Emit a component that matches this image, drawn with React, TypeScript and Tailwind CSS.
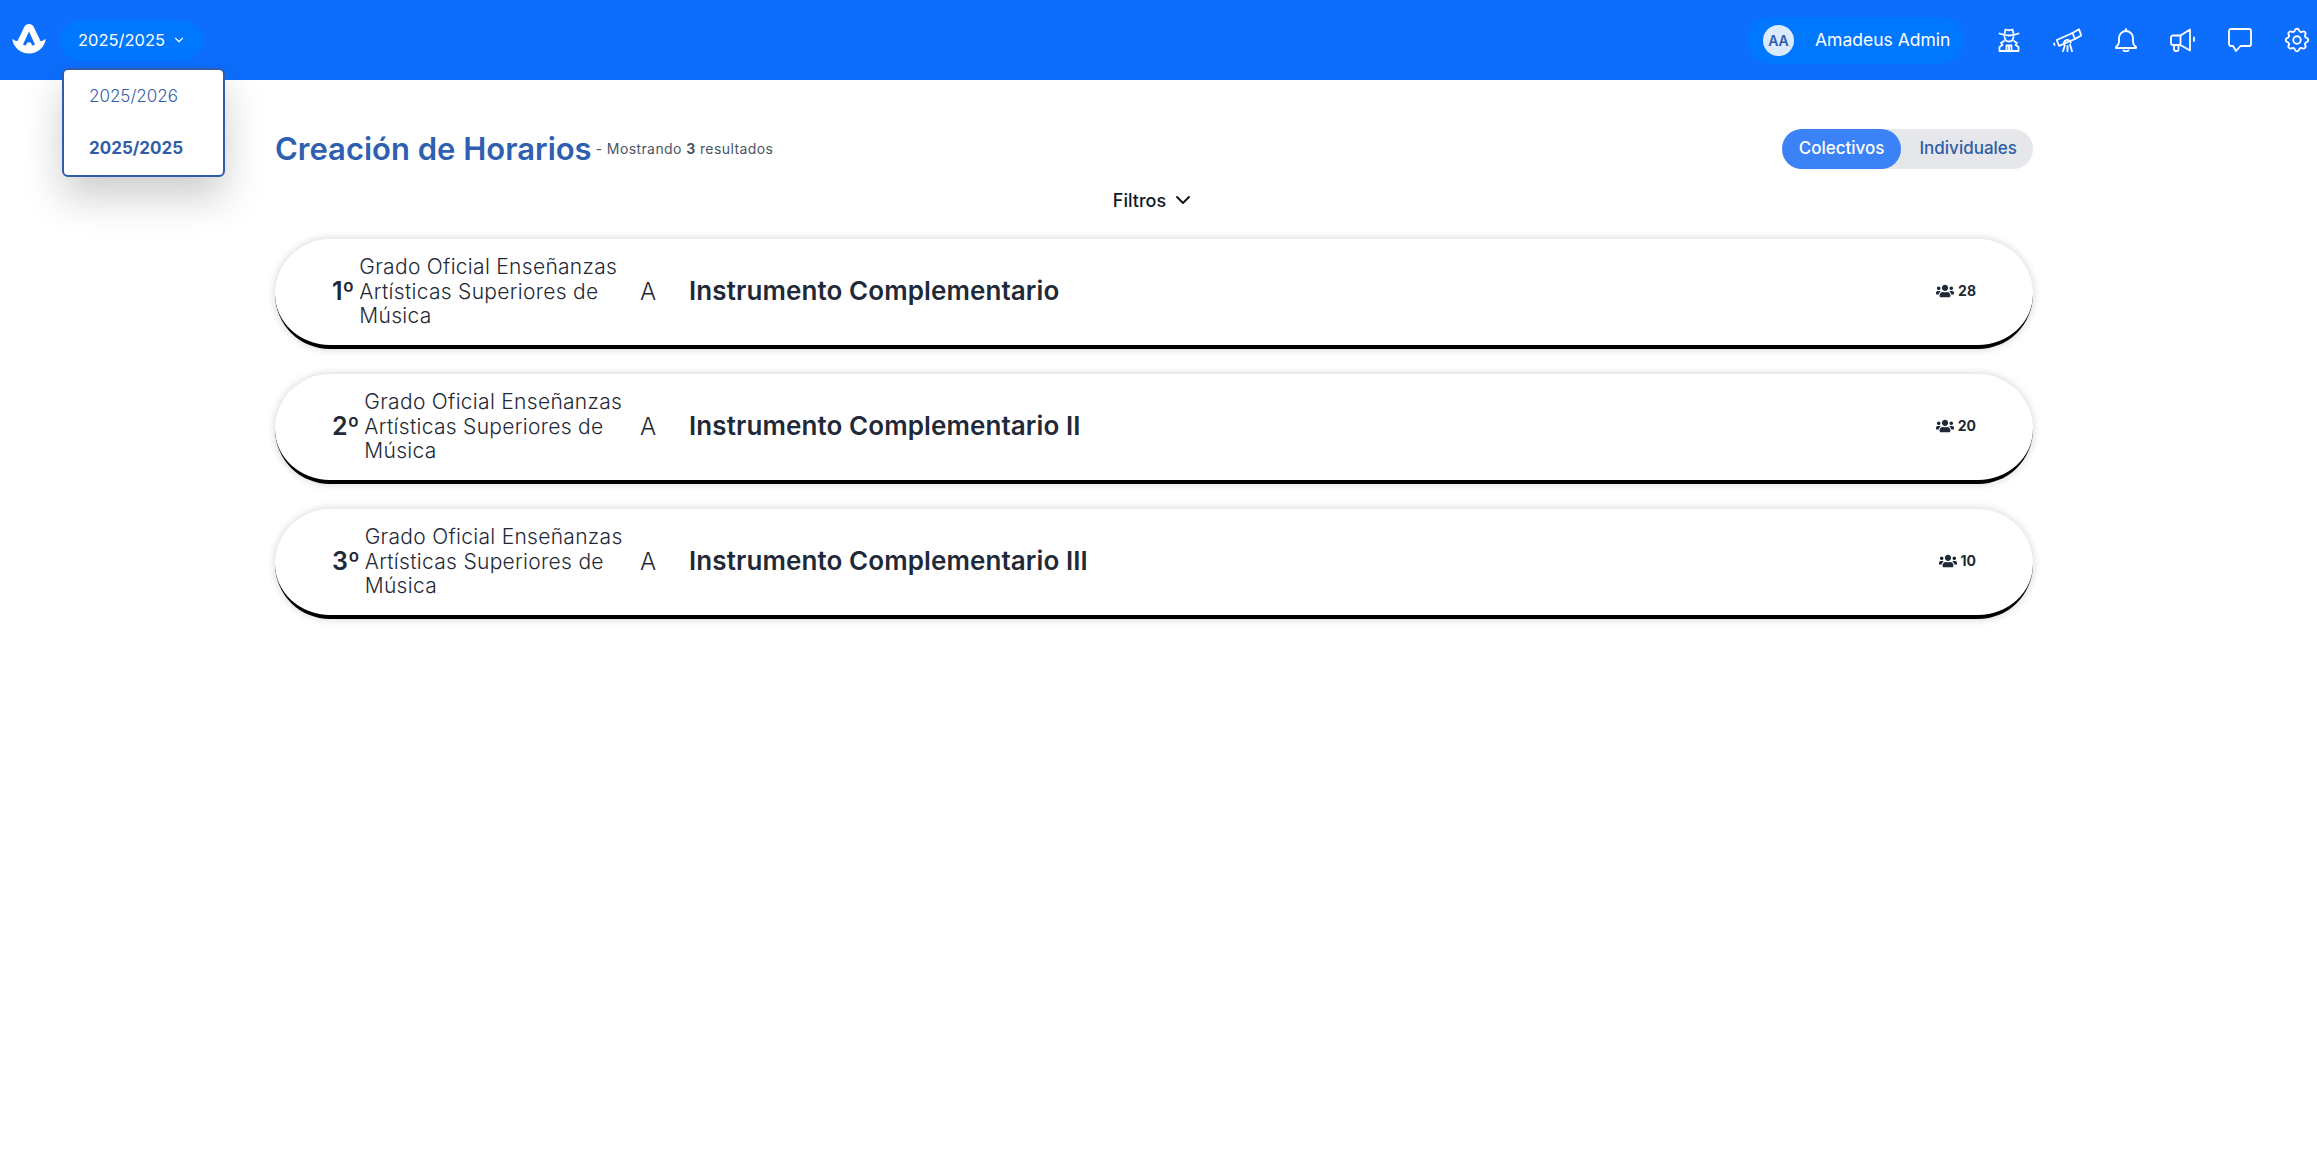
import React from 'react';
import { ChevronDown } from 'lucide-react';
import { FaUsers } from 'react-icons/fa';
import { TbSettings } from 'react-icons/tb';

const courses = [
    { year: '1º', name: 'Instrumento Complementario', students: 28 },
    { year: '2º', name: 'Instrumento Complementario II', students: 20 },
    { year: '3º', name: 'Instrumento Complementario III', students: 10 },
];

const Logo: React.FC = () => (
    <svg width="34" height="30" viewBox="0 0 34 30" fill="none" className="-mt-[2px]">
        <path fill="#fff" fillRule="evenodd" d="M12.500 2.500C13.400.9 14.800 0 17 0s3.600.9 4.500 2.500l7 14.500c1.200.2 2.600-.3 4-1.500.7-.5 1.300.1 1 .9C31.800 23.600 25.500 29.500 17 29.500S2.200 23.600.500 16.400c-.3-.8.300-1.400 1-.9 1.400 1.200 2.800 1.700 4 1.500zM17 7.500l-6 13c1 .5 2.200.9 3 1 .2-2 1.300-3.300 3-3.300s2.800 1.300 3 3.300c.8-.1 2-.5 3-1z" />
    </svg>
);

const SpyIcon: React.FC = () => (
    <svg width="22" height="24" viewBox="0 0 22 24" fill="none" stroke="#fff" strokeWidth="1.800" strokeLinecap="round" strokeLinejoin="round">
        <path d="M6.500 5.500 7.500 1.500Q11 3 14.500 1.500L15.500 5.500" />
        <path d="M1.500 5.500Q11 9.500 20.500 5.500" />
        <path d="M6.500 9Q7 13.500 11 13.500T15.500 9" />
        <path d="M6 13 3 15 4.500 17 1.500 19V23H20.500V19L17.500 17 19 15 16 13" />
        <path d="M8.500 23V17.500H13.500V23M11 17.500V23" />
    </svg>
);

const TelescopeIcon: React.FC = () => (
    <svg width="29" height="24" viewBox="0 0 29 24" fill="none" stroke="#fff" strokeWidth="1.800" strokeLinecap="round" strokeLinejoin="round">
        <path d="M19.500 5 26 1.200 28.200 7.500 22 11z" />
        <path d="M19.500 5 3.800 12 6 17.800 22 11" />
        <path d="M1 15.500 1.600 17" />
        <path d="M11 16.500A3.500 3.500 0 0 1 17.800 14.500" />
        <path d="M11.800 17.500 10 23.200M14.500 18V23.200M17 16.500 19 23.200" />
    </svg>
);

const BellIcon: React.FC = () => (
    <svg width="22" height="24" viewBox="0 0 22 24" fill="none" stroke="#fff" strokeWidth="1.800" strokeLinecap="round" strokeLinejoin="round">
        <path d="M11 1V3M11 3A7 7 0 0 0 4 10V14C4 16.500 2.500 17.500 1 19V20H21V19C19.500 17.500 18 16.500 18 14V10A7 7 0 0 0 11 3Z" />
        <path d="M8.500 22.500Q11 24 13.500 22.500" />
    </svg>
);

const MegaphoneIcon: React.FC = () => (
    <svg width="25" height="24" viewBox="0 0 25 24" fill="none" stroke="#fff" strokeWidth="1.800" strokeLinecap="round" strokeLinejoin="round">
        <path d="M10.500 7.500H3A2 2 0 0 0 1 9.500V15A2 2 0 0 0 3 17H10.500L20 22.500V1.500ZM10.500 7.500V17" />
        <path d="M4 17V21.500A1.500 1.500 0 0 0 5.500 23H7A1.500 1.500 0 0 0 8.500 21.500V17" />
        <path d="M24 9.500V13" />
    </svg>
);

const ChatIcon: React.FC = () => (
    <svg width="24" height="24" viewBox="0 0 24 24" fill="none" stroke="#fff" strokeWidth="1.800" strokeLinejoin="round">
        <path d="M3 1H21A2 2 0 0 1 23 3V16A2 2 0 0 1 21 18H12.500L8 23 5 18H3A2 2 0 0 1 1 16V3A2 2 0 0 1 3 1Z" />
    </svg>
);

const CourseCard: React.FC<{ year: string; name: string; students: number }> = ({ year, name, students }) => (
    <div className="flex items-center h-[110px] px-[57px] bg-white rounded-[55px] border-b-4 border-black shadow-[0_0_8px_rgba(0,0,0,0.18)] text-[#1f2937]">
        <div className="flex items-center w-[308px] shrink-0">
            <span className="text-[25px] font-semibold mr-[5px]">{year}</span>
            <span className="w-[265px] text-[21px] tracking-[0.3px] leading-[24.500px] font-light">Grado Oficial Enseñanzas Artísticas Superiores de Música</span>
        </div>
        <span className="w-[49px] shrink-0 text-[24px] font-light">A</span>
        <span className="flex-1 mb-[3px] text-[26px] tracking-[0.1px] font-semibold">{name}</span>
        <span className="flex items-center gap-1 mb-[2px] text-sm font-bold">
            <FaUsers className="w-[18px] h-[18px]" />
            {students}
        </span>
    </div>
);

export default function App() {
    return (
        <div className="relative min-h-[1161px] bg-white font-['Inter',sans-serif]">
            <header className="flex items-center justify-between h-20 pl-3 pr-2 bg-[#0d6efd] text-white">
                <div className="flex items-center gap-[14px]">
                    <Logo />
                    <button className="flex items-center gap-[7px] w-[143px] h-[41px] pl-[18px] rounded-full bg-[#0077ff] text-[16.500px]">
                        2025/2025
                        <ChevronDown className="w-[14px] h-[14px]" />
                    </button>
                </div>
                <div className="flex items-center">
                    <div className="flex items-center gap-[21px] w-[217px] h-[47px] pl-4 rounded-full bg-[#0077ff] text-[17.500px] mr-[34px]">
                        <span className="flex items-center justify-center w-[31px] h-[31px] rounded-full bg-[#dbeafe] text-[#2f5da8] text-[14px] font-semibold">AA</span>
                        Amadeus Admin
                    </div>
                    <div className="flex items-center gap-[33px]">
                        <SpyIcon />
                        <TelescopeIcon />
                        <BellIcon />
                        <MegaphoneIcon />
                        <ChatIcon />
                        <TbSettings className="w-[30px] h-[30px] -mx-[3px]" strokeWidth={1.500} />
                    </div>
                </div>
            </header>

            <div className="absolute left-[62px] top-[68px] w-[163px] h-[109px] pt-[1px] bg-white border-2 border-[#2f5da8] rounded-md shadow-[0_20px_40px_rgba(0,0,0,0.2)] text-[#2f5da8] text-[17px]">
                <div className="flex items-center h-[52px] pl-[25px] font-light">2025/2026</div>
                <div className="flex items-center h-[52px] pl-[25px] font-bold">2025/2025</div>
            </div>

            <main className="w-[1758px] ml-[275px] pt-[49px]">
                <div className="flex items-center justify-between h-10">
                    <div className="flex items-center">
                        <h1 className="text-[31px] font-semibold text-[#2f5fb0]">Creación de Horarios</h1>
                        <span className="ml-1 text-sm tracking-[0.4px] text-[#4b5563]">- Mostrando <b className="font-bold">3</b> resultados</span>
                    </div>
                    <div className="flex items-center h-10 rounded-full bg-[#e5e7eb] text-[17px] font-medium">
                        <span className="flex items-center h-10 px-[17px] rounded-full bg-[#3b82f6] text-white">Colectivos</span>
                        <span className="pl-[18px] pr-4 text-[#2f5da8]">Individuales</span>
                    </div>
                </div>
                <div className="flex items-center justify-center gap-[5px] h-6 mt-[19px] text-[18px] font-medium text-[#111827]">
                    Filtros
                    <ChevronDown className="w-6 h-6" />
                </div>
                <div className="flex flex-col gap-[25px] mt-[27px]">
                    {courses.map((c) => (
                        <CourseCard key={c.year} {...c} />
                    ))}
                </div>
            </main>
        </div>
    );
}
